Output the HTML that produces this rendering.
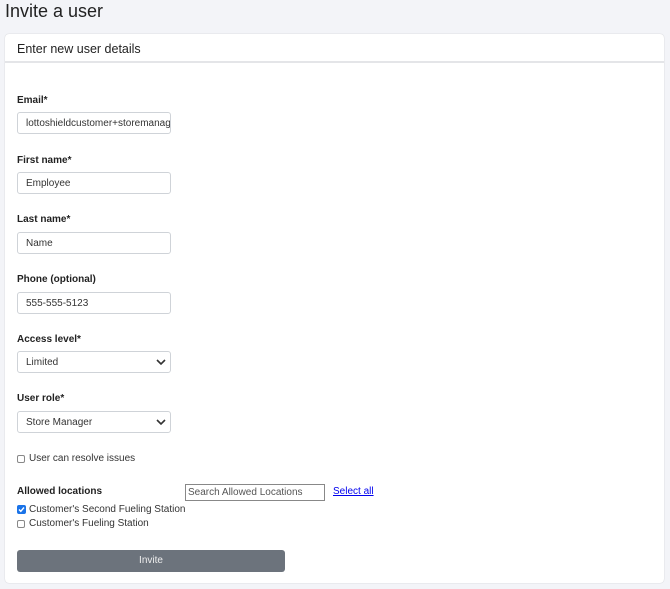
<!DOCTYPE html>
<html><head><meta charset="utf-8"><style>
*{box-sizing:border-box;margin:0;padding:0}
body{width:670px;height:589px;background:#f3f4f8;font-family:"Liberation Sans",sans-serif;color:#222;position:relative;overflow:hidden}
.abs{position:absolute}
h1{position:absolute;left:5px;top:1px;font-size:18px;font-weight:normal;color:#222}
.card{position:absolute;left:5px;top:34px;width:659px;height:549px;background:#fff;border-radius:4px;box-shadow:0 0 1px rgba(0,0,0,.25)}
.hd{position:absolute;left:5px;top:34px;width:659px;height:29px;border-bottom:2px solid #e4e5e8;font-size:12.5px;padding:8px 0 0 12px;color:#222}
.lbl{position:absolute;left:17px;font-size:10px;font-weight:bold;color:#222}
.inp{position:absolute;left:17px;width:154px;height:22px;border:1px solid #cfd3d8;border-radius:3px;font-size:10px;padding:5px 0 0 8px;color:#333;background:#fff;white-space:nowrap;overflow:hidden}
.chev{position:absolute;right:4px;top:6px}
.cb{position:absolute;left:17px;width:8px;height:8px;border:1px solid #888;border-radius:2px;background:#fff}
.ct{position:absolute;left:29px;font-size:10px;color:#333}
</style></head><body>
<h1>Invite a user</h1>
<div class="card"></div>
<div class="hd">Enter new user details</div>

<div class="lbl" style="top:95px">Email*</div>
<div class="inp" style="top:112px">lottoshieldcustomer+storemanag</div>
<div class="lbl" style="top:155px">First name*</div>
<div class="inp" style="top:172px">Employee</div>
<div class="lbl" style="top:214px">Last name*</div>
<div class="inp" style="top:232px">Name</div>
<div class="lbl" style="top:274px">Phone (optional)</div>
<div class="inp" style="top:292px">555-555-5123</div>
<div class="lbl" style="top:334px">Access level*</div>
<div class="inp" style="top:351px">Limited<svg class="chev" width="10" height="8" viewBox="0 0 10 8"><path d="M1 2l4 4 4-4" fill="none" stroke="#333" stroke-width="1.6"/></svg></div>
<div class="lbl" style="top:393px">User role*</div>
<div class="inp" style="top:411px">Store Manager<svg class="chev" width="10" height="8" viewBox="0 0 10 8"><path d="M1 2l4 4 4-4" fill="none" stroke="#333" stroke-width="1.6"/></svg></div>

<div class="cb" style="top:455px"></div>
<div class="ct" style="top:453px">User can resolve issues</div>

<div class="lbl" style="top:486px">Allowed locations</div>
<div class="abs" style="left:185px;top:484px;width:140px;height:17px;border:1px solid #888;font-size:10px;color:#555;padding:2px 0 0 2px;white-space:nowrap;overflow:hidden">Search Allowed Locations</div>
<div class="abs" style="left:333px;top:486px;font-size:10px;color:#0000ee;text-decoration:underline">Select all</div>

<div class="cb" style="top:505px;width:9px;height:9px;background:#1a73e8;border-color:#1a73e8"><svg width="9" height="9" viewBox="0 0 9 9" style="position:absolute;left:-1px;top:-1px"><path d="M2 4.5l1.8 1.8L7 2.5" fill="none" stroke="#fff" stroke-width="1.4"/></svg></div>
<div class="ct" style="top:504px">Customer's Second Fueling Station</div>
<div class="cb" style="top:520px"></div>
<div class="ct" style="top:518px">Customer's Fueling Station</div>

<div class="abs" style="left:17px;top:550px;width:268px;height:22px;background:#6c737c;border-radius:3px;color:#eee;font-size:10px;text-align:center;line-height:22px">Invite</div>
</body></html>
